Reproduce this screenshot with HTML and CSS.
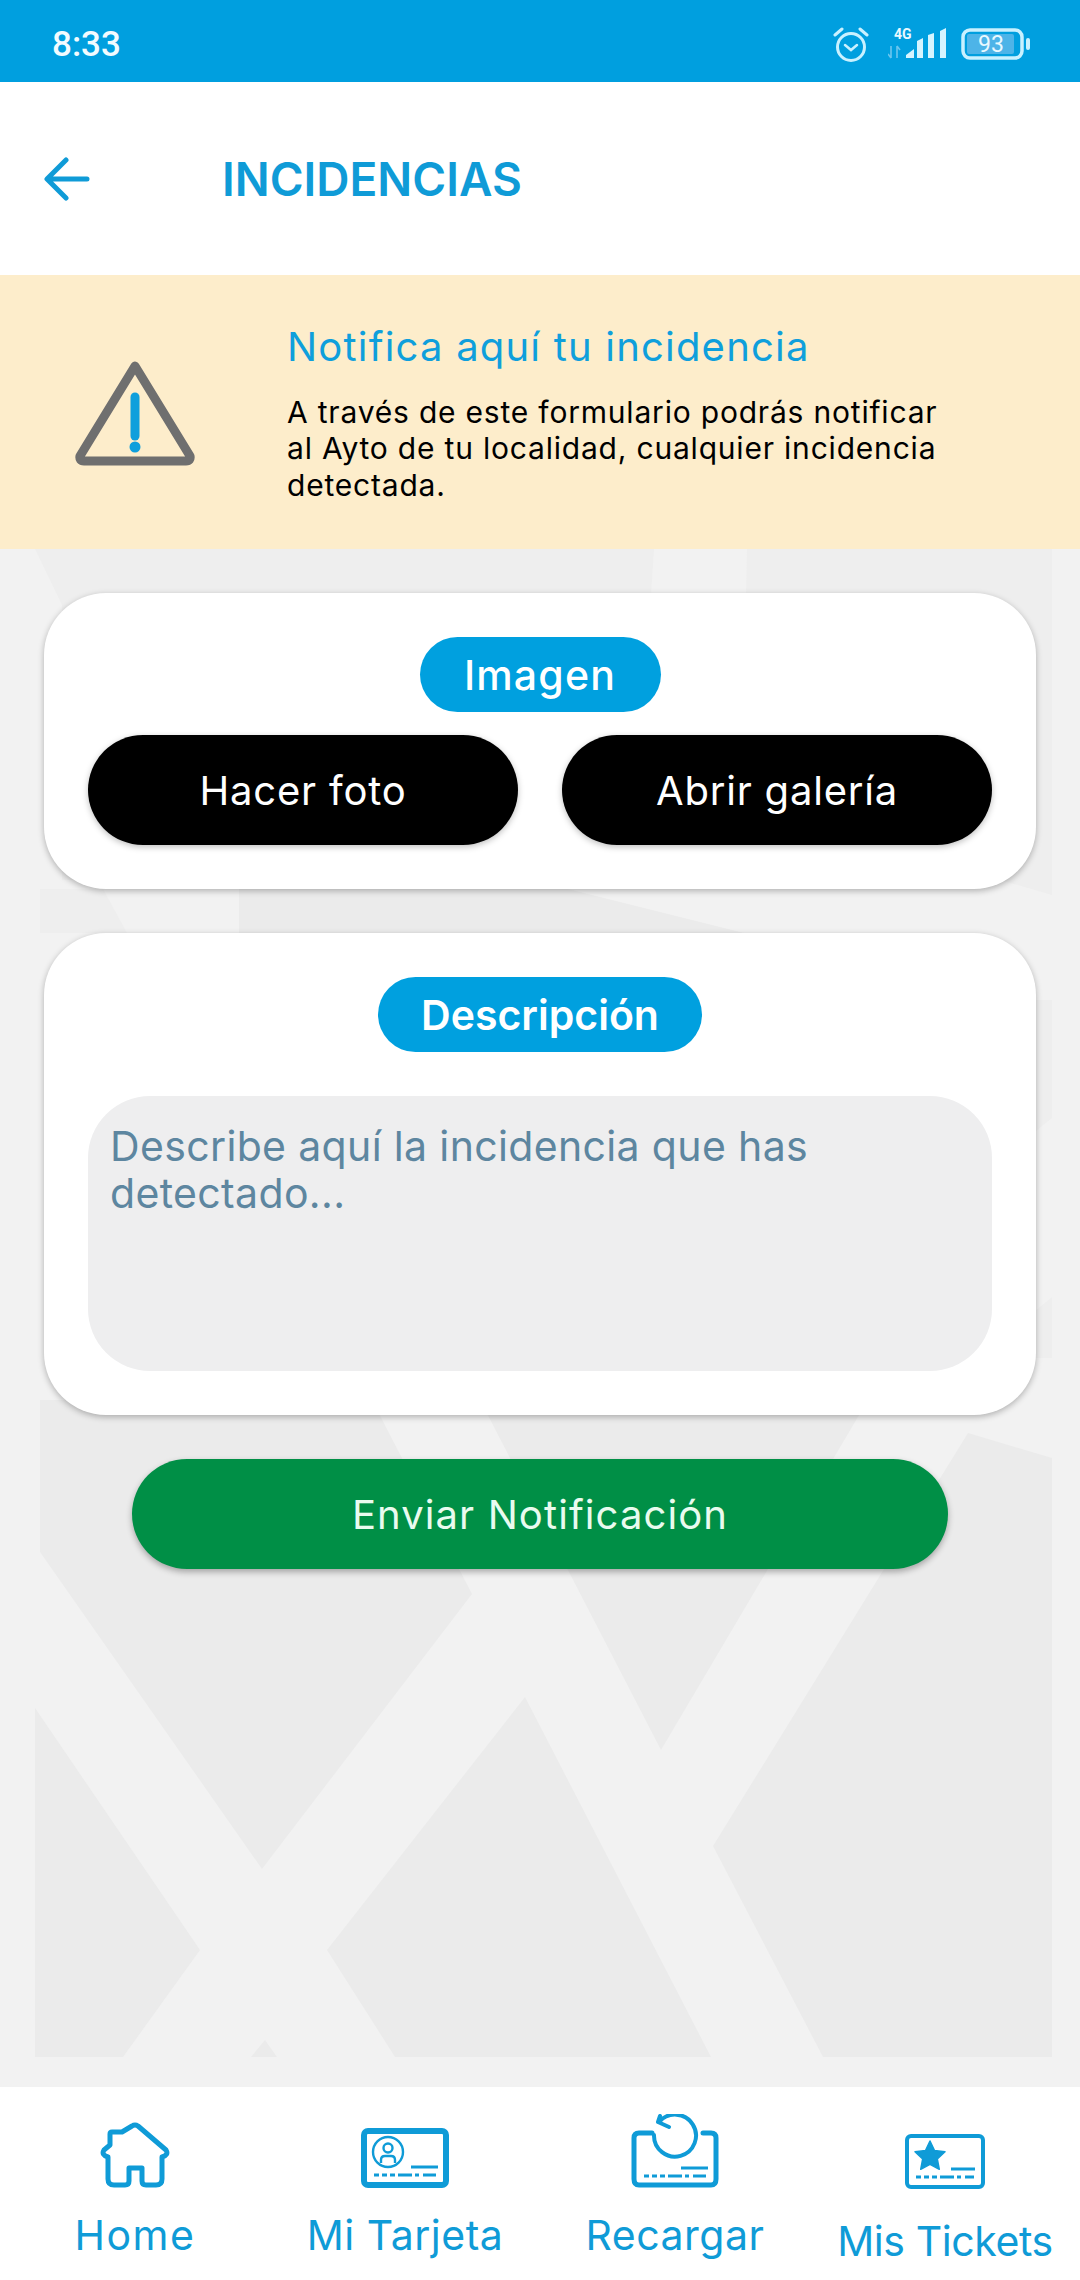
FILE: index.html
```html
<!DOCTYPE html>
<html lang="es">
<head>
    <meta charset="UTF-8">
    <meta name="viewport" content="width=device-width, initial-scale=1.0">
    <title>Incidencias</title>
    <link rel="stylesheet" href="styles.css">
</head>
<body>
<div class="app">
    <div class="status">
        <span class="status_time">8:33</span>
        <div class="status_icons">
            <svg class="ic_alarm" width="36" height="35" viewBox="0 0 36 35" fill="none" stroke="#c9f1ff" stroke-linecap="round">
                <circle cx="18" cy="20" r="13.5" stroke-width="3"/>
                <path d="M12 18l6 5 6-5" stroke-width="2.5"/>
                <path d="M2 8l7-6M34 8l-7-6" stroke-width="3"/>
            </svg>
            <svg class="ic_signal" width="58" height="40" viewBox="0 -4 58 40">
                <text x="6" y="11" class="ic_4g">4G</text>
                <path d="M3 18v12M0 26l3 4M9 30V18M12 22l-3-4" stroke="#6cc6ee" stroke-width="1.6" fill="none"/>
                <path d="M18 30v-3l8-6v9zM29 30V13l6-3v20zM40 30V7l6-2v25zM52 30V3l6-3v30z" fill="#d5f4ff"/>
            </svg>
            <svg class="ic_battery" width="70" height="32" viewBox="0 0 70 32">
                <rect x="2" y="2" width="59" height="28" rx="7" fill="none" stroke="#c9f1ff" stroke-width="3.5"/>
                <rect x="6" y="6" width="47" height="20" rx="2" fill="#4db4e8"/>
                <rect x="65" y="10" width="4" height="12" rx="2" fill="#c9f1ff"/>
                <text x="30" y="24" class="ic_batt_txt">93</text>
            </svg>
        </div>
    </div>

    <div class="top">
        <svg width="48" height="44" viewBox="0 0 48 44" fill="none" stroke="#0f9bd7" stroke-width="5" stroke-linecap="round" stroke-linejoin="round">
            <path d="M23 3L4 22l19 19M5 22h39"/>
        </svg>
        <h1 class="top_title">INCIDENCIAS</h1>
    </div>

    <div class="notice">
        <svg class="notice_ico" width="122" height="106" viewBox="0 0 122 106">
            <path d="M61 6L6 96q-1 5 4 5h102q5 0 4-5z" fill="none" stroke="#6f6f6f" stroke-width="9" stroke-linejoin="round"/>
            <path d="M61 37v39" stroke="#0f9fdc" stroke-width="9" stroke-linecap="round"/>
            <circle cx="61" cy="87" r="5.5" fill="#0f9fdc"/>
        </svg>
        <div class="notice_txt">
            <h2>Notifica aquí tu incidencia</h2>
            <p>A través de este formulario podrás notificar<br>al Ayto de tu localidad, cualquier incidencia<br>detectada.</p>
        </div>
    </div>

    <div class="main">
        <!-- fondo: mapa de calles -->
        <svg class="main_bg" viewBox="0 549 1080 1538" width="1080" height="1538">
            <g fill="#eeeeee">
                <path d="M35 549H654L648 640V880H62V605z"/>
                <path d="M747 549H1052V895L1000 880H740z"/>
                <path d="M40 889H103L127 933H40z"/>
                <path d="M1000 1000H1052V1118L1000 1160z"/>
                <path d="M1000 1340L1052 1297V1358H1000z"/>
            </g>
            <g fill="#ebebeb">
                <path d="M239 889H568L744 933H239z"/>
                <path d="M40 1400H372L472 1594 262 1869 40 1552z"/>
                <path d="M480 1400H868L661 1750z"/>
                <path d="M968 1433L1052 1458V2057H823L713 1846z"/>
                <path d="M525 1697L711 2057H395L327 1950z"/>
                <path d="M35 1708L200 1950 123 2057H35z"/>
                <path d="M265 2040L277 2057H251z"/>
            </g>
        </svg>

        <section class="card">
            <div class="badge badge_img">Imagen</div>
            <div class="btn_row">
                <button class="btn btn_black">Hacer foto</button>
                <button class="btn btn_black">Abrir galería</button>
            </div>
        </section>

        <section class="card">
            <div class="badge badge_desc">Descripción</div>
            <textarea class="desc" placeholder="Describe aquí la incidencia que has detectado..."></textarea>
        </section>

        <button class="btn btn_send">Enviar Notificación</button>
    </div>

    <nav class="nav">
        <a class="nav_item" href="#">
            <svg width="70" height="66" viewBox="0 0 70 66" fill="none" stroke="#0f9bd7" stroke-width="5" stroke-linejoin="round">
                <path d="M32 4Q35 2 38 4L66 28Q69 33 62 35V57Q62 63 56 63H46Q42 63 42 59V46H29V59Q29 63 25 63H14Q8 63 8 57V35Q1 33 4 28L10 23V12Q10 10 12 10H22z"/>
            </svg>
            <span class="nav_lbl nav_lbl_home">Home</span>
        </a>
        <a class="nav_item" href="#">
            <svg width="88" height="60" viewBox="0 0 88 60" fill="none" stroke="#0f9bd7">
                <rect x="3" y="3" width="82" height="54" rx="4" stroke-width="6"/>
                <circle cx="27" cy="24" r="15" stroke-width="2.4"/>
                <circle cx="27" cy="20" r="4.5" stroke-width="2.4"/>
                <path d="M20 35v-3q0-4 4-4h6q4 0 4 4v3" stroke-width="2.4"/>
                <path d="M50 39h27" stroke-width="3"/>
                <path d="M13 47h62" stroke-width="3" stroke-dasharray="5 3 5 3 5 3 14 3 4 4 9 0"/>
            </svg>
            <span class="nav_lbl">Mi Tarjeta</span>
        </a>
        <a class="nav_item" href="#">
            <svg width="88" height="74" viewBox="0 0 88 74" fill="none" stroke="#0f9bd7" stroke-linecap="round" stroke-linejoin="round">
                <path d="M21 19H8Q3 19 3 24V65Q3 71 8 71H80Q85 71 85 65V24Q85 19 80 19H72" stroke-width="5"/>
                <path d="M28 8A21 21 0 1 1 23 21" stroke-width="4"/>
                <path d="M29 2L27 8 38 13" stroke-width="4"/>
                <path d="M50 54h27" stroke-width="3" stroke-linecap="butt"/>
                <path d="M13 62h62" stroke-width="3" stroke-linecap="butt" stroke-dasharray="5 3 5 3 5 3 14 3 4 4 9 0"/>
            </svg>
            <span class="nav_lbl">Recargar</span>
        </a>
        <a class="nav_item" href="#">
            <svg width="80" height="55" viewBox="0 0 80 55" fill="none" stroke="#0f9bd7">
                <rect x="2" y="2" width="76" height="51" rx="4" stroke-width="4"/>
                <path d="M25 7l4.5 9.5 10.500 1.300-7.700 7.200 2 10.300-9.300-5-9.300 5 2-10.300-7.700-7.200 10.500-1.300z" fill="#0f9bd7" stroke-width="1.5" stroke-linejoin="round"/>
                <path d="M46 35h24" stroke-width="3"/>
                <path d="M11 43h58" stroke-width="3" stroke-dasharray="5 3 5 3 5 3 14 3 4 4 9 0"/>
            </svg>
            <span class="nav_lbl nav_lbl_low">Mis Tickets</span>
        </a>
    </nav>
</div>
</body>
</html>
```

FILE: styles.css
```css
body,h1,h2,p{
    margin: 0;
    padding: 0;
}
body{
    font-family: 'Inter', 'Noto Sans', sans-serif;
    background-color: #fff;
}
.app{
    width: 1080px;
    height: 2280px;
    display: flex;
    flex-direction: column;
    overflow: hidden;
}

/* barra de estado */
.status{
    height: 82px;
    box-sizing: border-box;
    padding: 6px 49px 0 52px;
    background-color: #009fdf;
    display: flex;
    align-items: center;
    justify-content: space-between;
    flex-shrink: 0;
}
.status_time{
    font-family: 'Roboto', sans-serif;
    font-size: 35px;
    font-weight: 500;
    color: #f2fbff;
}
.status_icons{
    display: flex;
    align-items: center;
}
.ic_signal{
    margin-left: 19px;
}
.ic_battery{
    margin-left: 15px;
}
.ic_4g{
    font-family: 'Roboto', sans-serif;
    font-size: 14px;
    font-weight: 700;
    fill: #e8f9ff;
}
.ic_batt_txt{
    font-family: 'Roboto', sans-serif;
    font-size: 23px;
    fill: #e8f9ff;
    text-anchor: middle;
}

/* cabecera */
.top{
    height: 193px;
    display: flex;
    align-items: center;
    padding-left: 43px;
    flex-shrink: 0;
}
.top_title{
    margin-left: 131px;
    font-size: 46px;
    font-weight: 600;
    color: #0f9bd7;
}

/* aviso */
.notice{
    height: 274px;
    background-color: #fdedcb;
    display: flex;
    align-items: center;
    padding-left: 74px;
    flex-shrink: 0;
}
.notice_ico{
    margin-top: 2px;
}
.notice_txt{
    margin-left: 91px;
    padding-top: 2px;
}
.notice_txt h2{
    font-size: 40px;
    font-weight: 400;
    color: #0f9fdc;
    line-height: 48px;
    letter-spacing: 1.2px;
    margin-bottom: 23px;
}
.notice_txt p{
    font-size: 30px;
    line-height: 36.5px;
    letter-spacing: 0.8px;
    color: #000;
}

/* contenido */
.main{
    flex: 1;
    position: relative;
    background-color: #f2f2f2;
    padding: 44px;
    display: flex;
    flex-direction: column;
    align-items: center;
    gap: 44px;
}
.main_bg{
    position: absolute;
    left: 0;
    top: 0;
}
.card{
    position: relative;
    width: 992px;
    box-sizing: border-box;
    padding: 44px;
    background-color: #fff;
    border-radius: 62px;
    box-shadow: 0 2px 6px rgba(0,0,0,0.28);
    display: flex;
    flex-direction: column;
    align-items: center;
}
.badge{
    height: 75px;
    line-height: 76px;
    background-color: #00a0df;
    border-radius: 38px;
    color: #fff;
    font-size: 41px;
    font-weight: 500;
    text-align: center;
}
.badge_img{
    width: 241px;
    margin-bottom: 23px;
    letter-spacing: 1.2px;
}
.badge_desc{
    width: 324px;
    margin-bottom: 44px;
    font-weight: 600;
}
.btn_row{
    width: 100%;
    display: flex;
    justify-content: space-between;
}
.btn{
    border: 0;
    height: 110px;
    padding-top: 2px;
    border-radius: 55px;
    font-family: inherit;
    font-size: 40px;
    color: #fff;
    cursor: pointer;
}
.btn_black{
    width: 430px;
    background-color: #000;
    box-shadow: 0 2px 6px rgba(0,0,0,0.25);
    letter-spacing: 0.8px;
}
.btn_send{
    position: relative;
    width: 816px;
    background-color: #008f46;
    color: #e9fbef;
    box-shadow: 0 3px 6px rgba(0,0,0,0.3);
    letter-spacing: 1.1px;
}
.desc{
    display: block;
    width: 100%;
    height: 275px;
    box-sizing: border-box;
    border: 0;
    outline: 0;
    resize: none;
    border-radius: 62px;
    background-color: #eeeeef;
    padding: 27px 22px;
    font-family: inherit;
    font-size: 41px;
    line-height: 47px;
    letter-spacing: 0.35px;
    overflow: hidden;
}
.desc::placeholder{
    color: #5d86a0;
    opacity: 1;
}

/* navegación inferior */
.nav{
    height: 193px;
    background-color: #fff;
    display: grid;
    grid-template-columns: repeat(4, 270px);
    flex-shrink: 0;
}
.nav_item{
    display: flex;
    flex-direction: column;
    align-items: center;
    text-decoration: none;
    color: #0f9bd7;
}
.nav_item svg{
    margin-top: auto;
}
.nav_lbl{
    font-size: 41px;
    line-height: 45px;
    letter-spacing: 0.5px;
    margin-top: 25px;
    margin-bottom: 22px;
    white-space: nowrap;
}
.nav_lbl_home{
    letter-spacing: 1.5px;
}
.nav_lbl_low{
    margin-top: 30px;
    margin-bottom: 16px;
    letter-spacing: -0.4px;
}
```
